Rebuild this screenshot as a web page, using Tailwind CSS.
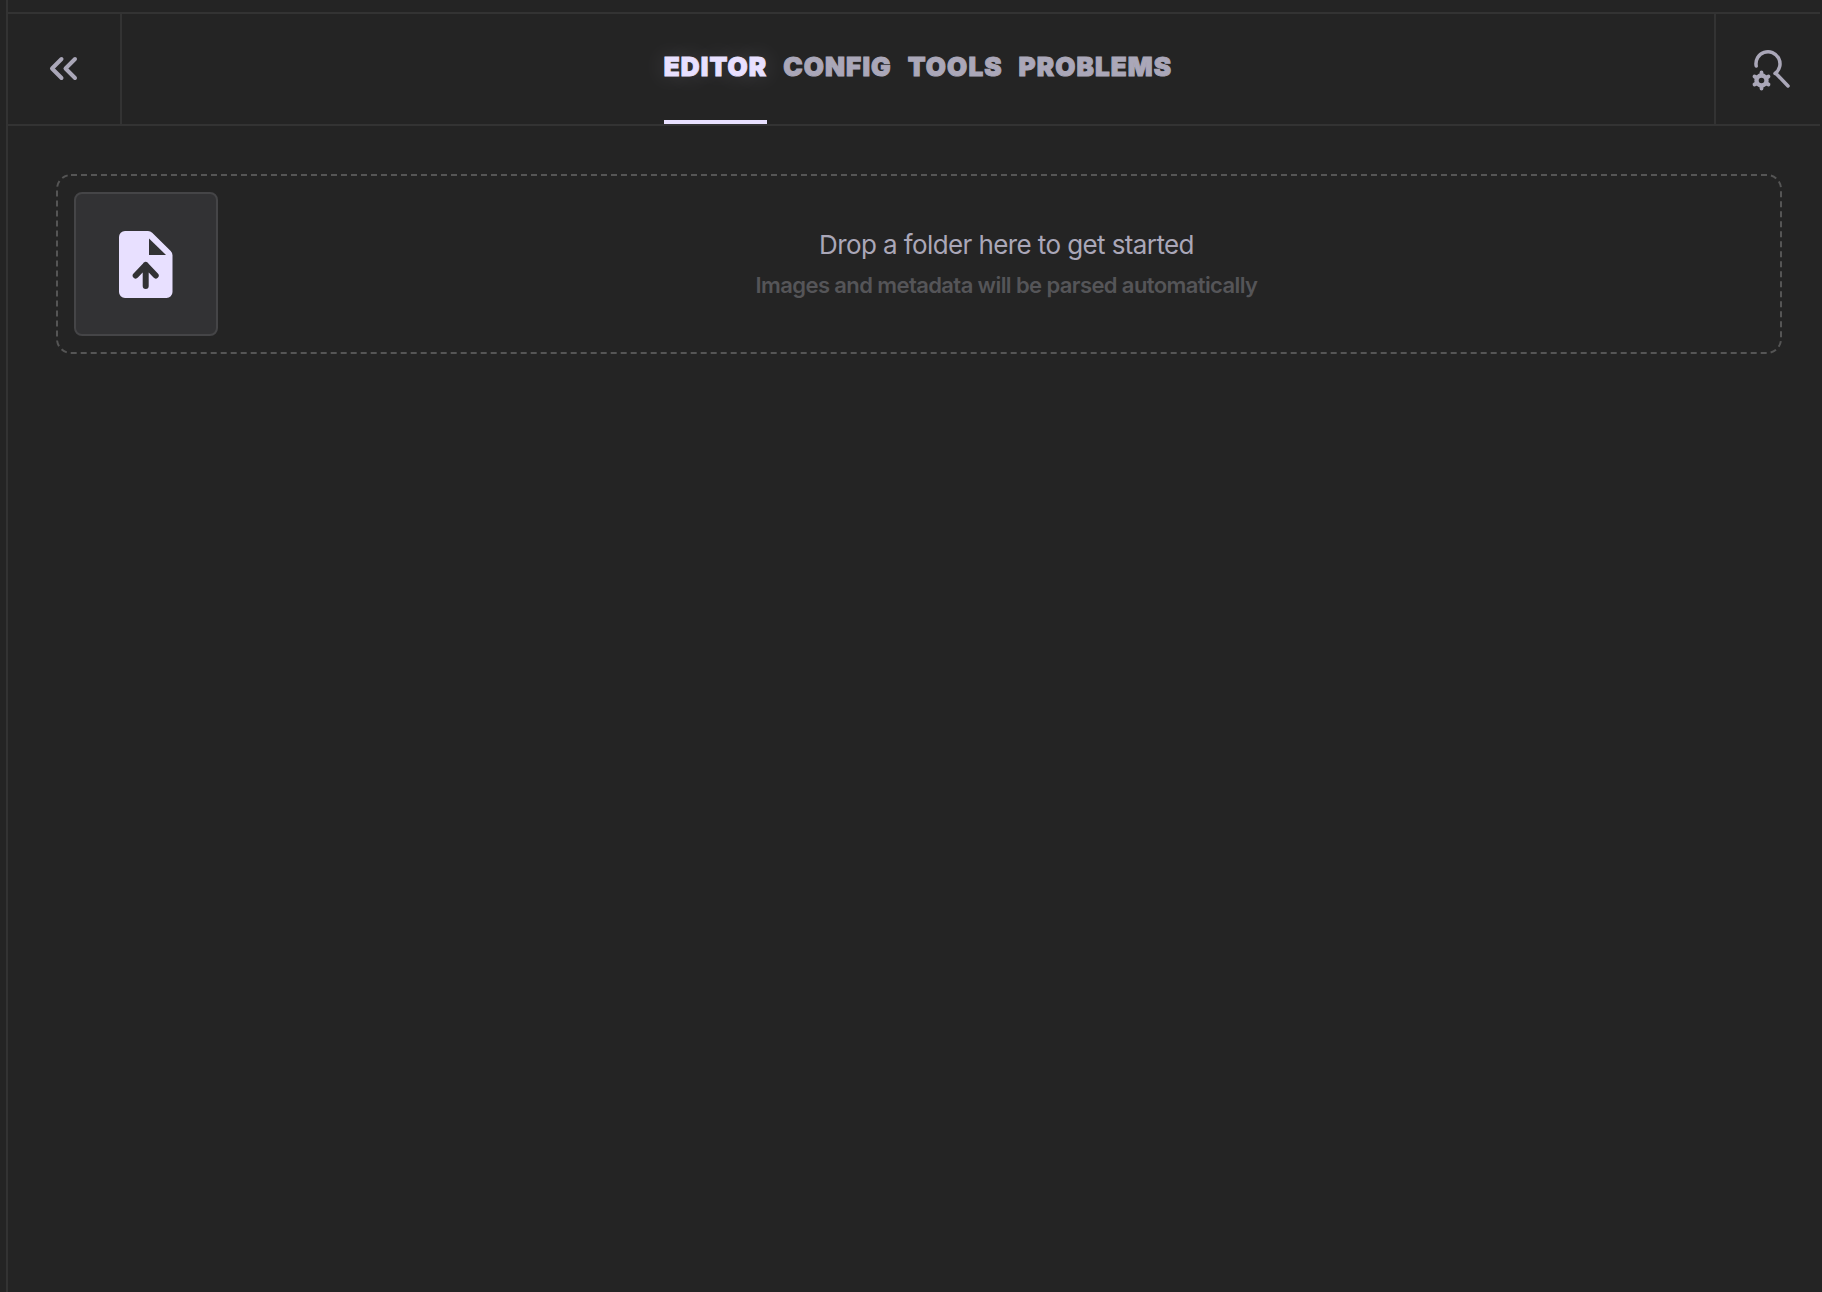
<!DOCTYPE html>
<html lang="en">
<head>
  <meta charset="UTF-8" />
  <title>Editor</title>
  <script src="https://cdn.jsdelivr.net/npm/@tailwindcss/browser@4"></script>
</head>
<body class="bg-[#242424] font-['Inter',sans-serif]">
  <div class="h-[1292px] w-[1822px] overflow-hidden pl-[6px] pr-[2px]">
    <div class="h-full border-l-2 border-[#333333] pt-[12px]">
      <!-- Top nav -->
      <nav class="flex h-[114px] border-y-2 border-[#333333]">
        <button class="flex w-[114px] shrink-0 items-center justify-center border-r-2 border-[#333333] pr-[2px]">
          <svg class="h-[30px] w-[30px] text-[#aaa7b8]" viewBox="0 0 30 30" fill="none" stroke="currentColor" stroke-width="4" stroke-linecap="round" stroke-linejoin="round">
            <path d="M13.500 5 4 14.500 13.500 24" />
            <path d="M27 5 17.500 14.500 27 24" />
          </svg>
        </button>
        <div class="flex grow justify-center">
          <div class="flex gap-[16px] text-[26px] font-black leading-none tracking-[1.1px] text-[#aaa7b8] [-webkit-text-stroke:1px_currentColor]">
            <a class="h-full border-b-[4px] border-[#e8e0ff] pt-[40px] text-[#e8e0ff] [text-shadow:0_0_24px_rgba(232,224,255,0.2)]">EDITOR</a>
            <a class="h-full pt-[40px]">CONFIG</a>
            <a class="h-full pt-[40px]">TOOLS</a>
            <a class="h-full pt-[40px]">PROBLEMS</a>
          </div>
        </div>
        <button class="flex w-[106px] shrink-0 items-center justify-center border-l-2 border-[#333333]">
          <svg class="mt-[2px] h-[44px] w-[44px] text-[#aaa7b8]" viewBox="0 0 44 44" fill="none" stroke="currentColor" stroke-width="3.500" stroke-linecap="round" stroke-linejoin="round">
            <path d="M10.200 18A12 12 0 1 1 29 25.500" />
            <path d="M30 25.500 42 38" />
            <circle cx="15.500" cy="32.500" r="5" stroke-width="4.400" />
            <path d="M15.500 24.500v2M15.500 38.500v2M8.500 28.500l1.800 1M20.700 35.500l1.800 1M8.500 36.500l1.800-1M20.700 29.500l1.800-1" stroke-width="3.800" />
          </svg>
        </button>
      </nav>

      <!-- Drop zone -->
      <div class="relative ml-[48px] mt-[48px] flex h-[180px] w-[1726px] items-center rounded-[14px] p-[18px]">
        <svg class="absolute inset-0 h-full w-full" fill="none">
          <rect x="1" y="1" width="1724" height="178" rx="14" stroke="#555555" stroke-width="2" stroke-dasharray="6 4" />
        </svg>
        <div class="flex h-[144px] w-[144px] shrink-0 items-center justify-center rounded-[8px] border-2 border-[#454547] bg-[#323234]">
          <svg class="h-[67px] w-[54px]" viewBox="0 0 54 67">
            <path d="M6 0H29a6 6 0 0 1 4.200 1.800L51.700 20a6 6 0 0 1 1.800 4.200V61a6 6 0 0 1-6 6H6a6 6 0 0 1-6-6V6a6 6 0 0 1 6-6z" fill="#e8e0ff" />
            <path d="M30 7.500 47 24H30z" fill="#323234" />
            <path d="M26.700 55V34M16.700 44.500 26.700 34l10 10.500" fill="none" stroke="#323234" stroke-width="6" stroke-linecap="round" stroke-linejoin="round" />
          </svg>
        </div>
        <div class="ml-[31px] flex grow flex-col items-center">
          <p class="text-[26px] leading-[36px] tracking-[-0.6px] text-[#aaa7b8]">Drop a folder here to get started</p>
          <p class="mt-[6px] text-[22px] leading-[32px] font-semibold tracking-[-0.6px] text-[#555558]">Images and metadata will be parsed automatically</p>
        </div>
      </div>
    </div>
  </div>
</body>
</html>
